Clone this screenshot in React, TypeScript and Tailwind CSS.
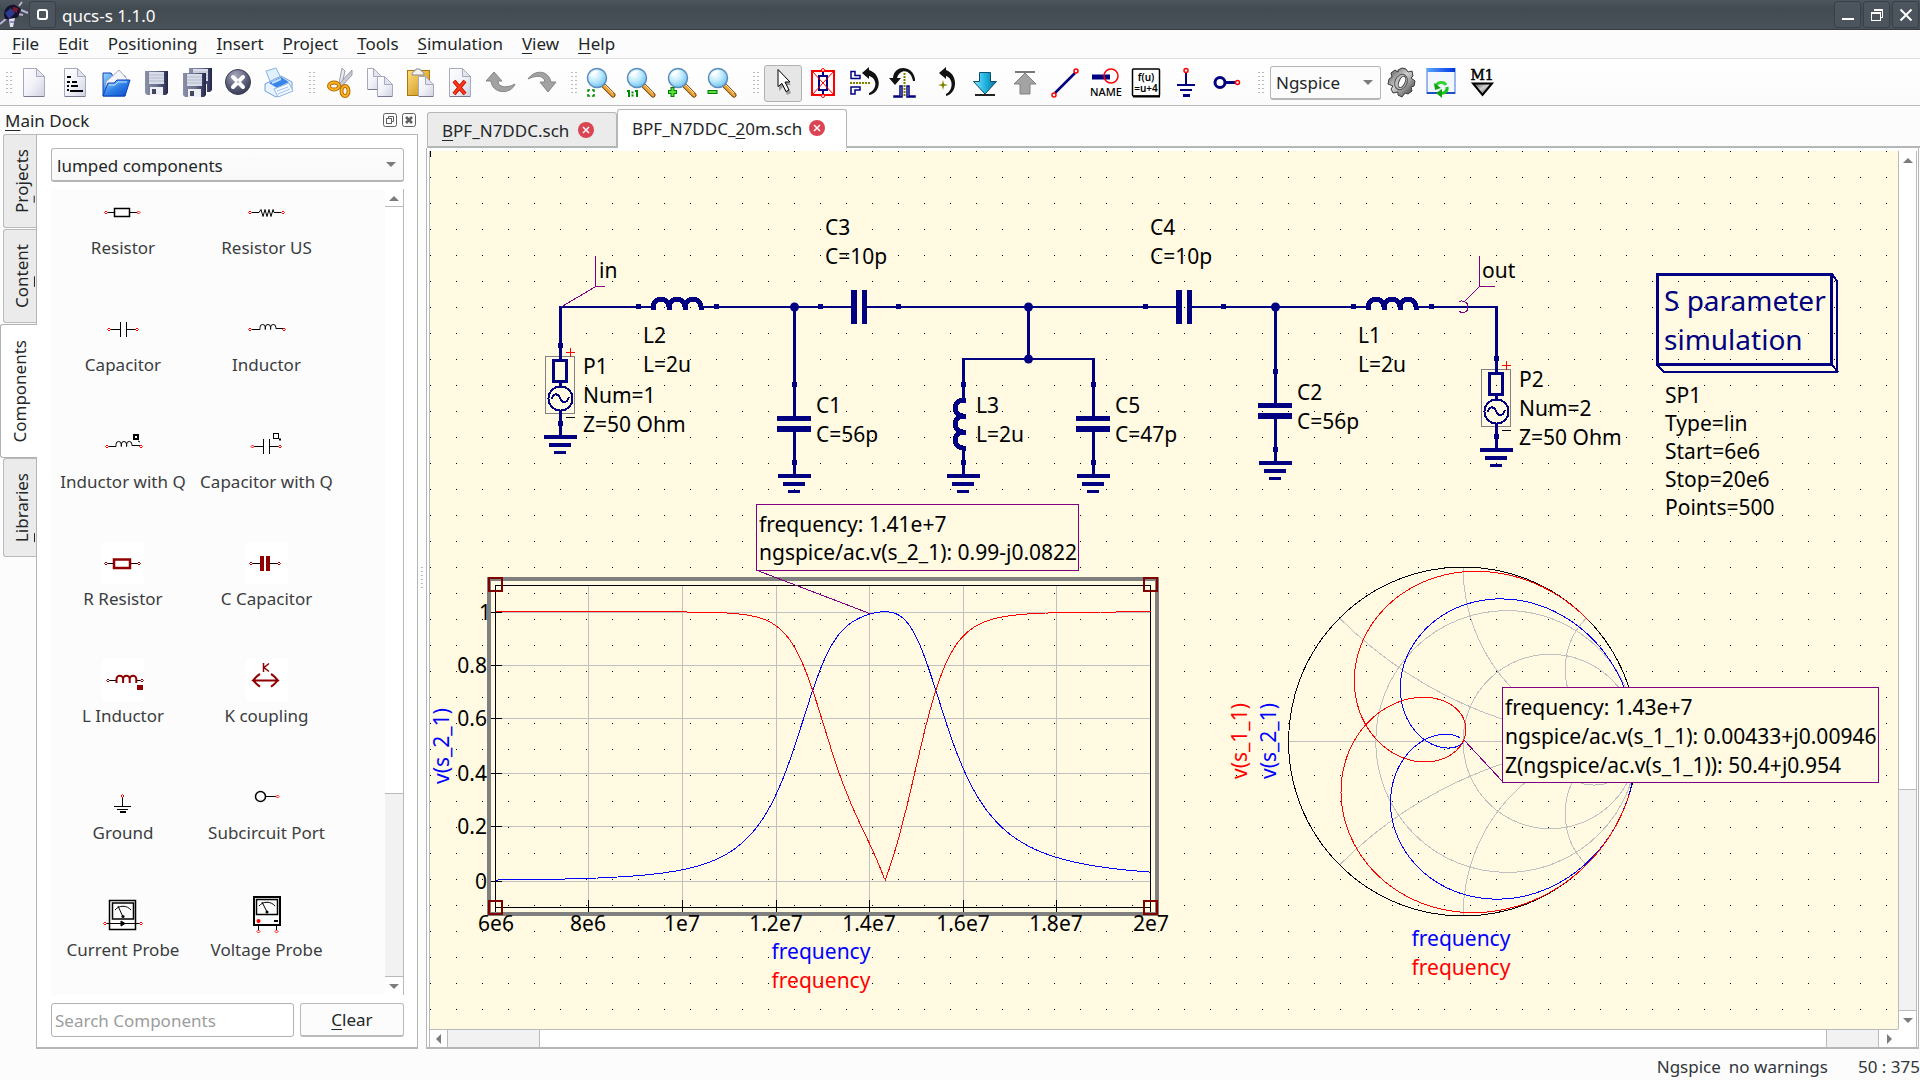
import React from "react";

/* ------------------------------------------------------------------ */
/* Filter model: lossless ladder, chain matrix [a, jb; jc, d]           */
/* ------------------------------------------------------------------ */
type Chain = [number, number, number, number];
type Complex = [number, number];

const mul = ([a, b, c, d]: Chain, [e, f, g, h]: Chain): Chain => [
  a * e - b * g,
  a * f + b * h,
  c * e + d * g,
  d * h - c * f,
];
const series = (x: number): Chain => [1, x, 0, 1];
const shunt = (b: number): Chain => [1, 0, b, 1];
const div = ([a, b]: Complex, [c, d]: Complex): Complex => {
  const m = c * c + d * d;
  return [(a * c + b * d) / m, (b * c - a * d) / m];
};

function sParams(f: number): { s11: Complex; s21: Complex } {
  const w = 2 * Math.PI * f;
  const xl = w * 2e-6;
  const xc = -1 / (w * 10e-12);
  const parts: Chain[] = [
    series(xl),
    shunt(w * 56e-12),
    series(xc),
    shunt(w * 47e-12 - 1 / xl),
    series(xc),
    shunt(w * 56e-12),
    series(xl),
  ];
  const [a, b, c, d] = parts.reduce(mul);
  const den: Complex = [a + d, b / 50 + c * 50];
  return { s11: div([a - d, b / 50 - c * 50], den), s21: div([2, 0], den) };
}

const sweep = Array.from({ length: 500 }, (_, i) => {
  const f = 6e6 + (14e6 * i) / 499;
  return { f, ...sParams(f) };
});
const line = (pts: Complex[]) =>
  "M" + pts.map(([x, y]) => x.toFixed(1) + " " + y.toFixed(1)).join("L");
const cart = (k: "s11" | "s21") =>
  line(
    sweep.map((p) => [
      495.5 + ((p.f - 6e6) / 14e6) * 655,
      880.5 - 268.8 * Math.hypot(p[k][0], p[k][1]),
    ]),
  );
const smith = (k: "s11" | "s21") =>
  line(sweep.map((p) => [1463 + 174.5 * p[k][0], 741.5 - 174.5 * p[k][1]]));

/* ------------------------------------------------------------------ */
/* Schematic symbols                                                    */
/* ------------------------------------------------------------------ */
const NAVY = "#000080";

const Pin = ({ x, y }: { x: number; y: number }) => (
  <rect x={x - 2} y={y - 2} width={5} height={5} fill={NAVY} />
);
const H = ({ x1, x2, y }: { x1: number; x2: number; y: number }) => (
  <rect x={x1} y={y - 1} width={x2 - x1} height={2} fill={NAVY} />
);
const V = ({ x, y1, y2 }: { x: number; y1: number; y2: number }) => (
  <rect x={x - 1} y={y1} width={3} height={y2 - y1} fill={NAVY} />
);
const Node = ({ x, y }: { x: number; y: number }) => (
  <circle cx={x + 0.5} cy={y} r={4.5} fill={NAVY} />
);
const Ground = ({ x, y }: { x: number; y: number }) => (
  <g fill={NAVY}>
    <rect x={x - 16} y={y} width={33} height={4} />
    <rect x={x - 11} y={y + 8} width={22} height={4} />
    <rect x={x - 6} y={y + 16} width={12} height={3} />
  </g>
);
const Label = ({
  x,
  y,
  lines,
  step = 29,
}: {
  x: number;
  y: number;
  lines: string[];
  step?: number;
}) => (
  <g fill="#000">
    {lines.map((t, i) => (
      <text key={t} x={x} y={y + i * step}>
        {t}
      </text>
    ))}
  </g>
);
const CoilH = ({ x }: { x: number }) => (
  <g>
    <H x1={x - 39} x2={x - 22} y={307} />
    <H x1={x + 22} x2={x + 39} y={307} />
    <path
      d={`M${x - 24} 310V307a8 8 0 0 1 16 0V310V307a8 8 0 0 1 16 0V310V307a8 8 0 0 1 16 0V310`}
      fill="none"
      stroke={NAVY}
      strokeWidth={5}
    />
    <Pin x={x - 39} y={306} />
    <Pin x={x + 39} y={306} />
  </g>
);
const CapH = ({ x }: { x: number }) => (
  <g fill={NAVY}>
    <H x1={x - 39} x2={x - 6} y={307} />
    <H x1={x + 6} x2={x + 39} y={307} />
    <rect x={x - 8} y={290} width={6} height={34} />
    <rect x={x + 3} y={290} width={5} height={34} />
    <Pin x={x - 39} y={306} />
    <Pin x={x + 39} y={306} />
  </g>
);
const CapV = ({ x, y }: { x: number; y: number }) => (
  <g fill={NAVY}>
    <V x={x} y1={y - 39} y2={y - 5} />
    <V x={x} y1={y + 5} y2={y + 52} />
    <rect x={x - 17} y={y - 7} width={34} height={5} />
    <rect x={x - 17} y={y + 3} width={34} height={6} />
    <Pin x={x} y={y - 39} />
    <Pin x={x} y={y + 39} />
    <Ground x={x} y={y + 51} />
  </g>
);
const Port = ({ x, y }: { x: number; y: number }) => (
  <g>
    <rect x={x - 14.5} y={y + 11.5} width={29} height={57} fill="none" stroke="#808080" />
    <V x={x} y1={y} y2={y + 14} />
    <V x={x} y1={y + 37} y2={y + 42} />
    <V x={x} y1={y + 66} y2={y + 91} />
    <rect x={x - 6.5} y={y + 15.5} width={13} height={21} fill="none" stroke={NAVY} strokeWidth={3} />
    <circle cx={x + 0.5} cy={y + 53.5} r={12} fill="none" stroke={NAVY} strokeWidth={2} />
    <path
      d={`M${x - 8} ${y + 54}c1 -6 6 -6 8 -1s7 6 9 -1`}
      fill="none"
      stroke={NAVY}
      strokeWidth={2}
    />
    <path d={`M${x + 6} ${y + 7.5}h9M${x + 10.5} ${y + 3}v9`} stroke="#f00" />
    <path d={`M${x + 6} ${y + 72.5}h9`} stroke="#000" />
    <Pin x={x} y={y} />
    <Pin x={x} y={y + 78} />
    <Ground x={x} y={y + 90} />
  </g>
);

const xTicks: [number, string][] = [
  [496, "6e6"],
  [588, "8e6"],
  [682, "1e7"],
  [776, "1.2e7"],
  [869, "1.4e7"],
  [963, "1.6e7"],
  [1056, "1.8e7"],
  [1151, "2e7"],
];
const yTicks: [number, string][] = [
  [612, "1"],
  [665, "0.8"],
  [718, "0.6"],
  [773, "0.4"],
  [826, "0.2"],
  [881, "0"],
];

function CartesianDiagram() {
  return (
    <g>
      <g shapeRendering="crispEdges" stroke="#c0c0c0">
        {xTicks.slice(1, 7).map(([x]) => (
          <path key={x} d={`M${x + 0.5} 586V907`} />
        ))}
        {yTicks.map(([y]) => (
          <path key={y} d={`M496 ${y + 0.5}H1150`} />
        ))}
      </g>
      <g fill="#000" textAnchor="end">
        {yTicks.map(([y, t]) => (
          <text key={t} x={t === "1" ? 491 : 487} y={y + 8}>
            {t}
          </text>
        ))}
      </g>
      <g shapeRendering="crispEdges" fill="none">
        <rect x={495.5} y={585.5} width={655} height={322} stroke="#000" />
        {xTicks.slice(1, 7).map(([x]) => (
          <path key={x} d={`M${x + 0.5} 900V912`} stroke="#000" />
        ))}
        {yTicks.map(([y]) => (
          <path key={y} d={`M491 ${y + 0.5}H502`} stroke="#000" />
        ))}
        <path d="M495.5 907V912M1150.5 907V912" stroke="#000" />
        <path d={cart("s21")} stroke="#00f" />
        <path d={cart("s11")} stroke="#f00" />
        <rect x={489} y={579} width={668} height={335} stroke="#808080" strokeWidth={4} />
        {[495, 1150].map((x) =>
          [584, 907].map((y) => (
            <rect
              key={`${x}-${y}`}
              x={x - 6}
              y={y - 6}
              width={13}
              height={13}
              stroke="#800000"
              strokeWidth={2}
            />
          )),
        )}
      </g>
      <g fill="#000" textAnchor="middle">
        {xTicks.map(([x, t]) => (
          <text key={t} x={x} y={931}>
            {t}
          </text>
        ))}
      </g>
      <g textAnchor="middle">
        <text x={821} y={959} fill="#00f">
          frequency
        </text>
        <text x={821} y={988} fill="#f00">
          frequency
        </text>
        <text transform="translate(449 746) rotate(-90)" fill="#00f">
          v(s_2_1)
        </text>
      </g>
      <path d="M756 570L871 614" stroke="#800080" shapeRendering="crispEdges" />
      <rect x={756.5} y={504.5} width={322} height={66} fill="#fffae1" stroke="#800080" />
      <Label x={759} y={532} lines={["frequency: 1.41e+7", "ngspice/ac.v(s_2_1): 0.99-j0.0822"]} step={28} />
    </g>
  );
}

function SmithDiagram() {
  const cx = 1463;
  const cy = 741.5;
  const r = 174.5;
  const right = cx + r;
  return (
    <g>
      <clipPath id="smith-clip">
        <circle cx={cx} cy={cy} r={r} />
      </clipPath>
      <g clipPath="url(#smith-clip)" fill="none" stroke="#c0c0c0" shapeRendering="crispEdges">
        <path d={`M${cx - r} ${cy}H${right}`} />
        {[1 / 3, 1, 3].map((k) => (
          <circle key={k} cx={right - r / (1 + k)} cy={cy} r={r / (1 + k)} />
        ))}
        {[0.4142, 1, 2.4142].map((k) => (
          <g key={k}>
            <circle cx={right} cy={cy - r / k} r={r / k} />
            <circle cx={right} cy={cy + r / k} r={r / k} />
          </g>
        ))}
      </g>
      <g fill="none" shapeRendering="crispEdges">
        <circle cx={cx} cy={cy} r={r} stroke="#000" />
        <path d={smith("s21")} stroke="#00f" />
        <path d={smith("s11")} stroke="#f00" />
        <path d="M1464 740L1503 782" stroke="#800080" />
      </g>
      <rect x={1502.5} y={687.5} width={376} height={95} fill="#fffae1" stroke="#800080" />
      <Label
        x={1505}
        y={715}
        lines={[
          "frequency: 1.43e+7",
          "ngspice/ac.v(s_1_1): 0.00433+j0.00946",
          "Z(ngspice/ac.v(s_1_1)): 50.4+j0.954",
        ]}
      />
      <g textAnchor="middle">
        <text x={1461} y={946} fill="#00f">
          frequency
        </text>
        <text x={1461} y={975} fill="#f00">
          frequency
        </text>
        <text transform="translate(1247 741) rotate(-90)" fill="#f00">
          v(s_1_1)
        </text>
        <text transform="translate(1276 741) rotate(-90)" fill="#00f">
          v(s_2_1)
        </text>
      </g>
    </g>
  );
}

function Schematic() {
  return (
    <svg
      className="absolute inset-0 h-full w-full bg-[#fffae1] text-[21px]"
      role="img"
      aria-label="Band-pass filter schematic"
    >
      <defs>
        <pattern id="grid-dots" width={26} height={26} patternUnits="userSpaceOnUse">
          <rect width={1} height={1} fill="#000" />
        </pattern>
      </defs>
      <rect width="100%" height="100%" fill="url(#grid-dots)" />
      <rect width={1} height={6} fill="#000" />
      <g transform="translate(-430 -151)">
        <g shapeRendering="crispEdges">
          <H x1={559} x2={638} y={307} />
          <H x1={716} x2={820} y={307} />
          <H x1={898} x2={1145} y={307} />
          <H x1={1223} x2={1353} y={307} />
          <H x1={1431} x2={1498} y={307} />
          <V x={560} y1={306} y2={346} />
          <V x={1496} y1={306} y2={359} />
          <V x={794} y1={307} y2={385} />
          <V x={1028} y1={307} y2={359} />
          <H x1={962} x2={1095} y={359} />
          <V x={963} y1={358} y2={401} />
          <V x={1093} y1={358} y2={385} />
          <V x={1275} y1={307} y2={372} />
          <CoilH x={677} />
          <CoilH x={1392} />
          <CapH x={859} />
          <CapH x={1184} />
          <CapV x={794} y={423} />
          <CapV x={1093} y={423} />
          <CapV x={1275} y={410} />
          <path
            d="M966 400H963a8 8 0 0 0 0 16H966H963a8 8 0 0 0 0 16H966H963a8 8 0 0 0 0 16H966"
            fill="none"
            stroke={NAVY}
            strokeWidth={5}
          />
          <V x={963} y1={447} y2={475} />
          <Pin x={963} y={384} />
          <Pin x={963} y={462} />
          <Ground x={963} y={474} />
          <Port x={560} y={345} />
          <Port x={1496} y={358} />
          <g fill="none" stroke="#800080">
            <path d="M595.5 256V286.5H605M595 287L561 307" />
            <path d="M1479.5 256V286.5H1495M1479 287L1465 301M1459 302C1461 300 1468 301 1468 307S1462 314 1459 311" />
          </g>
          <g fill="none" stroke={NAVY}>
            <rect x={1657.5} y={274.5} width={174} height={90} strokeWidth={3} />
            <path d="M1832 274L1837 281V372H1664L1657 365M1832 365L1838 372" strokeWidth={2} />
          </g>
        </g>
        <Node x={794} y={307} />
        <Node x={1028} y={307} />
        <Node x={1028} y={359} />
        <Node x={1275} y={307} />
        <Label x={599} y={278} lines={["in"]} />
        <Label x={1482} y={278} lines={["out"]} />
        <Label x={825} y={235} lines={["C3", "C=10p"]} />
        <Label x={1150} y={235} lines={["C4", "C=10p"]} />
        <Label x={643} y={343} lines={["L2", "L=2u"]} />
        <Label x={1358} y={343} lines={["L1", "L=2u"]} />
        <Label x={583} y={374} lines={["P1", "Num=1", "Z=50 Ohm"]} />
        <Label x={1519} y={387} lines={["P2", "Num=2", "Z=50 Ohm"]} />
        <Label x={816} y={413} lines={["C1", "C=56p"]} />
        <Label x={976} y={413} lines={["L3", "L=2u"]} />
        <Label x={1115} y={413} lines={["C5", "C=47p"]} />
        <Label x={1297} y={400} lines={["C2", "C=56p"]} />
        <Label
          x={1665}
          y={403}
          lines={["SP1", "Type=lin", "Start=6e6", "Stop=20e6", "Points=500"]}
          step={28}
        />
        <g fill={NAVY} className="text-[28px]">
          <text x={1664} y={311}>
            S parameter
          </text>
          <text x={1664} y={350}>
            simulation
          </text>
        </g>
        <CartesianDiagram />
        <SmithDiagram />
      </g>
    </svg>
  );
}

/* ------------------------------------------------------------------ */
/* Toolbar icons (32 x 32)                                              */
/* ------------------------------------------------------------------ */
const Ic = ({ children }: { children: React.ReactNode }) => (
  <svg width={32} height={32} viewBox="0 0 32 32" fill="none" aria-hidden="true">
    {children}
  </svg>
);

const SharedDefs = () => (
  <svg width={0} height={0} className="absolute" aria-hidden="true">
    <defs>
      <linearGradient id="paper" x1="0" y1="0" x2="1" y2="1">
        <stop offset="0" stopColor="#fff" />
        <stop offset=".5" stopColor="#f1f2f8" />
        <stop offset="1" stopColor="#cfd1e2" />
      </linearGradient>
      <linearGradient id="floppy" x1="0" y1="0" x2="1" y2="0">
        <stop offset="0" stopColor="#8a90a8" />
        <stop offset=".5" stopColor="#6d7390" />
        <stop offset="1" stopColor="#23264a" />
      </linearGradient>
      <linearGradient id="folder" x1="0" y1="0" x2="1" y2="1">
        <stop offset="0" stopColor="#9fdcff" />
        <stop offset=".5" stopColor="#2f7fe6" />
        <stop offset="1" stopColor="#0b48c8" />
      </linearGradient>
      <radialGradient id="glass" cx=".35" cy=".3" r=".75">
        <stop offset="0" stopColor="#fff" />
        <stop offset=".5" stopColor="#bfeafd" />
        <stop offset="1" stopColor="#6cc0ee" />
      </radialGradient>
      <linearGradient id="gold" x1="0" y1="0" x2="1" y2="1">
        <stop offset="0" stopColor="#ffe07a" />
        <stop offset="1" stopColor="#c88a14" />
      </linearGradient>
      <linearGradient id="metal" x1="0" y1="0" x2="1" y2="1">
        <stop offset="0" stopColor="#4a4a4a" />
        <stop offset=".45" stopColor="#d2d2d2" />
        <stop offset="1" stopColor="#2c2c2c" />
      </linearGradient>
      <linearGradient id="cyan" x1="0" y1="0" x2="1" y2="0">
        <stop offset="0" stopColor="#8be6ff" />
        <stop offset=".5" stopColor="#22b5e2" />
        <stop offset="1" stopColor="#066f9c" />
      </linearGradient>
      <linearGradient id="winbar" x1="0" y1="0" x2="1" y2="0">
        <stop offset="0" stopColor="#5aa6ff" />
        <stop offset="1" stopColor="#0035e0" />
      </linearGradient>
      <radialGradient id="disc" cx=".4" cy=".25" r=".8">
        <stop offset="0" stopColor="#a6a9bd" />
        <stop offset=".6" stopColor="#5b5e78" />
        <stop offset="1" stopColor="#34364d" />
      </radialGradient>
    </defs>
  </svg>
);

const Page = ({ x = 5, y = 1, w = 22, h = 29 }) => (
  <>
    <path
      d={`M${x + 0.5} ${y + 0.5}h${w - 9}l8 8v${h - 9}h-${w - 1}z`}
      fill="url(#paper)"
      stroke="#a7a9bf"
    />
    <path d={`M${x + w - 8.5} ${y + 0.5}v8h8z`} fill="#e3e4ee" stroke="#a7a9bf" />
    <path d={`M${x + 1} ${y + h - 0.5}h${w - 2}`} stroke="#77798f" />
  </>
);
const Disk = ({ x, y }: { x: number; y: number }) => (
  <g transform={`translate(${x} ${y})`}>
    <path d="M0 0H23V22L21 24H2L0 22Z" fill="url(#floppy)" />
    <rect x={4} y={1} width={15} height={12} fill="#d9dce9" />
    <path d="M4 4h15M4 7h15M4 10h15" stroke="#b5b9cc" />
    <rect x={5} y={16} width={13} height={8} fill="#eef0f6" />
    <rect x={7} y={18} width={4} height={5} fill="#43475f" />
  </g>
);
const Lens = ({ children }: { children: React.ReactNode }) => (
  <Ic>
    <path d="M20 19L29 28" stroke="#7a4a12" strokeWidth={5} strokeLinecap="round" />
    <path d="M20 19L29 28" stroke="#eda63a" strokeWidth={3} strokeLinecap="round" />
    <path d="M21 18l8 8" stroke="#ffe0a0" strokeWidth={1} />
    <circle cx={13} cy={11} r={9.5} fill="url(#glass)" stroke="#5a8dbd" strokeWidth={1.5} />
    <path d="M7 9c1-3 4-5 7-4" stroke="#fff" strokeWidth={2} />
    {children}
  </Ic>
);

const NewIcon = <Ic><Page /></Ic>;
const TextIcon = (
  <Ic>
    <Page />
    <path d="M8 10h4M8 15h3M13 15h5M8 19h2M12 19h7M8 23h2M11 24h13" stroke="#000" strokeWidth={2} />
  </Ic>
);
const OpenIcon = (
  <Ic>
    <path d="M3 6h8l2 3h12v20H3z" fill="url(#folder)" stroke="#0a3fb0" />
    <path d="M6 15L19 3l8 9v8H6z" fill="#f4f5fb" stroke="#a9acc6" />
    <path d="M3 29L8 16H14l3-3h13l-5 16z" fill="url(#folder)" stroke="#0a43bd" />
    <path d="M9 18h6l3-3h9" stroke="#bfe6ff" />
  </Ic>
);
const SaveIcon = <Ic><Disk x={5} y={4} /></Ic>;
const SaveAllIcon = (
  <Ic>
    <Disk x={8} y={1} />
    <Disk x={2} y={6} />
  </Ic>
);
const CloseIcon = (
  <Ic>
    <circle cx={16} cy={15} r={12.5} fill="url(#disc)" stroke="#3b3d55" />
    <path d="M11 10l10 10m0-10l-10 10" stroke="#fff" strokeWidth={4} strokeLinecap="round" />
    <circle cx={16} cy={15} r={1.500} fill="#c9cbd8" />
  </Ic>
);
const PrintIcon = (
  <Ic>
    <path d="M3 4l10-3 6 12-11 4z" fill="#dff0ff" stroke="#86b4e6" />
    <path d="M2 17l16-8 11 6v8L13 30 2 24z" fill="#e9f3ff" stroke="#6f9ed8" />
    <path d="M6 16l12-6 8 5-12 6z" fill="#3a86e8" />
    <path d="M9 16l9-4" stroke="#bfe0ff" strokeWidth={2} />
    <path d="M11 22l15-6 4 8-15 6z" fill="#f5faff" stroke="#8bb5e4" />
    <path d="M14 24l11-4M15 27l12-5" stroke="#9cc1ee" />
  </Ic>
);
const CutIcon = (
  <Ic>
    <path d="M18 1l-3 15 3 1 3-13z" fill="#e8e8ee" stroke="#9a9ca8" />
    <path d="M28 3L15 17l3 2L28 8z" fill="#c9cad6" stroke="#9a9ca8" />
    <ellipse cx={10} cy={19} rx={5} ry={3.500} stroke="#b56a00" strokeWidth={4} />
    <ellipse cx={10} cy={19} rx={5} ry={3.500} stroke="#ffb31f" strokeWidth={2} />
    <ellipse cx={21} cy={24} rx={3.500} ry={5} stroke="#b56a00" strokeWidth={4} />
    <ellipse cx={21} cy={24} rx={3.500} ry={5} stroke="#ffb31f" strokeWidth={2} />
  </Ic>
);
const CopyIcon = (
  <Ic>
    <Page x={3} y={1} w={15} h={22} />
    <Page x={13} y={9} w={16} h={21} />
  </Ic>
);
const PasteIcon = (
  <Ic>
    <rect x={2.5} y={3.5} width={22} height={25} fill="url(#gold)" stroke="#a8780e" />
    <path d="M7 8c0-4 3-3 4-6h4c1 3 4 2 4 6z" fill="#f2f2f2" stroke="#8a8a90" />
    <Page x={13} y={9} w={16} h={21} />
  </Ic>
);
const DeleteIcon = (
  <Ic>
    <Page x={4} />
    <path d="M9 14L20 27M20 14L9 27" stroke="#c01000" strokeWidth={4} />
    <path d="M9 14L20 27M20 14L9 27" stroke="#ff3a1a" strokeWidth={2} />
  </Ic>
);
const UndoIcon = (
  <Ic>
    <path d="M1 14L9 5l8 9h-4c0 6 8 8 17 3C26 28 7 27 6 14z" fill="#a2a2a2" stroke="#858585" />
  </Ic>
);
const RedoIcon = (
  <Ic>
    <path d="M2 12C8 3 22 2 25 15h5l-8 10-8-10h5c-1-7-9-7-17-3z" fill="#a2a2a2" stroke="#858585" />
  </Ic>
);
const FitIcon = (
  <Lens>
    <path d="M4 25v-2h2M8 23h2v2M4 27v2h2M8 29h2v-2" stroke="#008a00" strokeWidth={1.5} />
  </Lens>
);
const OneIcon = (
  <Lens>
    <path d="M3 24h2v6M11 24h2v6M8.500 24.500v2M8.500 27.500v2" stroke="#008a00" strokeWidth={2} />
  </Lens>
);
const PlusIcon = (
  <Lens>
    <path d="M7.500 20v10M3 25h9" stroke="#007a00" strokeWidth={4} />
    <path d="M7.500 21v8M4 25h7" stroke="#5be03a" strokeWidth={2} />
  </Lens>
);
const MinusIcon = (
  <Lens>
    <rect x={3} y={23.500} width={9} height={3} fill="#5be03a" stroke="#007a00" />
  </Lens>
);
const PointerIcon = (
  <Ic>
    <path d="M12 3v21l4-4 4 8 4-2-4-8h4z" fill="#9a9a9a" />
    <path d="M11 2.500v17l4-3 4 8 3-1.500-4-8h5z" fill="#fff" stroke="#000" />
  </Ic>
);
const DeactivateIcon = (
  <Ic>
    <g shapeRendering="crispEdges">
      <path d="M16 4v24" stroke={NAVY} strokeWidth={2} />
      <rect x={12} y={9} width={8} height={14} stroke={NAVY} strokeWidth={2} fill="#fff" />
      <rect x={5} y={4} width={22} height={24} stroke="#f00" strokeWidth={2} />
    </g>
    <path d="M5 4l22 24M27 4L5 28" stroke="#f00" />
    <circle cx={16} cy={3} r={1.500} fill="#fff" stroke="#f00" />
    <circle cx={16} cy={29} r={1.500} fill="#fff" stroke="#f00" />
  </Ic>
);
const MirrorXIcon = (
  <Ic>
    <path d="M3 4.500v7h9v-3h-5v-4zM3 27v-7h9v3h-5v4z" stroke={NAVY} strokeWidth={1.500} />
    <path d="M2 16h20" stroke="#808000" strokeWidth={2} strokeDasharray="2 1" />
    <path d="M14 6L21 0v3c13 4 13 23 0 25v-2c9-4 8-15 0-17v3z" fill="#111" />
  </Ic>
);
const MirrorYIcon = (
  <Ic>
    <path d="M6 29h6V19h2v11H6zM27 29h-6V19h-2v11h8z" stroke={NAVY} strokeWidth={1.500} />
    <path d="M16.500 6v24" stroke="#808000" strokeWidth={2} strokeDasharray="2 1" />
    <path d="M1 11h4C6-3 25-2 27 12v2h-2C23 2 12 1 9 11h4l-6 7z" fill="#111" />
  </Ic>
);
const RotateIcon = (
  <Ic>
    <path d="M15 13l1 4 4 1-4 1-1 4-1-4-4-1 4-1z" fill="#808000" />
    <path d="M11 6L18 0v3c12 4 12 23 0 26v-2c8-4 7-16 0-18v3z" fill="#111" />
  </Ic>
);
const IntoIcon = (
  <Ic>
    <path d="M10.500 5.500h11v9h6L16 27 4.500 14.500h6z" fill="url(#cyan)" stroke="#0a4f70" />
    <path d="M6 28h20" stroke="#222" strokeWidth={2} />
  </Ic>
);
const PopIcon = (
  <Ic>
    <path d="M6 5h20" stroke="#777" strokeWidth={2} />
    <path d="M16 6L27 17h-6v10H11V17H5z" fill="#a3a3a3" stroke="#808080" />
  </Ic>
);
const WireIcon = (
  <Ic>
    <path d="M6 26L26 6" stroke={NAVY} strokeWidth={2.500} />
    <circle cx={5} cy={28} r={2} fill="#fff" stroke="#f00" strokeWidth={1.500} />
    <circle cx={27} cy={4} r={2} fill="#fff" stroke="#f00" strokeWidth={1.500} />
  </Ic>
);
const NameIcon = (
  <Ic>
    <path d="M2 10h18" stroke={NAVY} strokeWidth={5} />
    <circle cx={21} cy={9} r={7} stroke="#f00" strokeWidth={1.500} />
    <text x={16} y={29} textAnchor="middle" fill="#000" className="text-[11px] font-medium">
      NAME
    </text>
  </Ic>
);
const EquationIcon = (
  <Ic>
    <rect x={2.500} y={2} width={27} height={27} rx={1} fill="#fff" stroke="#000" strokeWidth={1.500} />
    <path d="M3 29.500h27" stroke="#000" strokeWidth={2} />
    <text x={16} y={14} textAnchor="middle" fill="#000" className="text-[10px] font-semibold">
      f(u)
    </text>
    <text x={16} y={25} textAnchor="middle" fill="#000" className="text-[10px] font-semibold">
      =u+4
    </text>
  </Ic>
);
const GroundIcon = (
  <Ic>
    <path d="M16 5v13" stroke={NAVY} strokeWidth={2} />
    <path d="M7 18h18" stroke={NAVY} strokeWidth={2} />
    <path d="M10 23h12" stroke={NAVY} strokeWidth={2} />
    <path d="M13 28.500h7" stroke={NAVY} strokeWidth={3} />
    <circle cx={16} cy={3.500} r={2} fill="#fff" stroke="#f00" strokeWidth={1.500} />
  </Ic>
);
const PortIcon = (
  <Ic>
    <circle cx={9} cy={15.500} r={5} stroke={NAVY} strokeWidth={3} />
    <path d="M14 15.500h10" stroke={NAVY} strokeWidth={3} />
    <circle cx={26.500} cy={15.500} r={2} fill="#fff" stroke="#f00" strokeWidth={1.500} />
  </Ic>
);
const GearIcon = (
  <Ic>
    <path
      d="M13 3l4-2 4 1 2 3 4-1 1 5-2 2 4 3-1 5-3 1 1 4-4 3-3-1-3 4-4-2v-3l-5 1-2-4 2-3-5-2 1-5 3-2-1-4 4-3 3 2z"
      fill="url(#metal)"
      stroke="#3a3a3a"
    />
    <ellipse cx={16} cy={15} rx={6} ry={8} transform="rotate(25 16 15)" fill="#bdbdbd" stroke="#555" />
    <ellipse cx={17} cy={15} rx={3} ry={6} transform="rotate(25 17 15)" fill="#fff" stroke="#444" />
  </Ic>
);
const SimulateIcon = (
  <Ic>
    <rect x={2} y={1.500} width={28} height={25} fill="#f2f6ff" stroke="#3f74d6" />
    <rect x={2} y={1} width={28} height={4} fill="url(#winbar)" />
    <path d="M2 26h28" stroke="#1c4fc0" strokeWidth={2} />
    <path d="M11 19c1-4 8-5 10-1" stroke="#35d135" strokeWidth={3} />
    <path d="M9 16l1 7 6-2z" fill="#0fa00f" />
    <path d="M22 20c1 5-4 7-7 6" stroke="#19c419" strokeWidth={3} />
    <path d="M17 22v9l-6-5z" fill="#0fa00f" />
  </Ic>
);
const MarkerIcon = (
  <Ic>
    <text
      x={16}
      y={13}
      textAnchor="middle"
      fill="#000"
      stroke="#000"
      strokeWidth={0.500}
      className="font-['DejaVu_Serif',serif] text-[14px]"
    >
      M1
    </text>
    <path d="M7 16.500h19L16.500 28z" fill="url(#metal)" stroke="#000" strokeWidth={2} />
  </Ic>
);

type Tool = [string, React.ReactNode];
const fileTools: Tool[] = [
  ["New", NewIcon],
  ["New text", TextIcon],
  ["Open", OpenIcon],
  ["Save", SaveIcon],
  ["Save all", SaveAllIcon],
  ["Close", CloseIcon],
  ["Print", PrintIcon],
];
const editTools: Tool[] = [
  ["Cut", CutIcon],
  ["Copy", CopyIcon],
  ["Paste", PasteIcon],
  ["Delete", DeleteIcon],
  ["Undo", UndoIcon],
  ["Redo", RedoIcon],
];
const viewTools: Tool[] = [
  ["View all", FitIcon],
  ["View 1:1", OneIcon],
  ["Zoom in", PlusIcon],
  ["Zoom out", MinusIcon],
];
const workTools: Tool[] = [
  ["Select", PointerIcon],
  ["Deactivate", DeactivateIcon],
  ["Mirror about X axis", MirrorXIcon],
  ["Mirror about Y axis", MirrorYIcon],
  ["Rotate", RotateIcon],
  ["Go into subcircuit", IntoIcon],
  ["Pop out", PopIcon],
  ["Wire", WireIcon],
  ["Wire label", NameIcon],
  ["Insert equation", EquationIcon],
  ["Insert ground", GroundIcon],
  ["Insert port", PortIcon],
];
const simTools: Tool[] = [
  ["Simulator settings", GearIcon],
  ["Simulate", SimulateIcon],
  ["Set marker on graph", MarkerIcon],
];

const Tools = ({ items, active }: { items: Tool[]; active?: string }) => (
  <>
    {items.map(([name, icon]) => (
      <button
        key={name}
        aria-label={name}
        className={
          name === active
            ? "mx-px flex h-[37px] items-center justify-center rounded-[3px] border border-[#b0b1b2] bg-[#e6e6e6]"
            : "flex h-[37px] items-center justify-center"
        }
      >
        {icon}
      </button>
    ))}
  </>
);

const Grip = () => (
  <svg width={6} height={22} aria-hidden="true" shapeRendering="crispEdges">
    {[0, 4, 8, 12, 16, 20].map((y) => (
      <path key={y} d={`M0 ${y + 0.5}h2M4 ${y + 0.5}h2`} stroke="#b9babb" />
    ))}
  </svg>
);

/* ------------------------------------------------------------------ */
/* Component palette icons (42 x 42)                                    */
/* ------------------------------------------------------------------ */
const RED = "#f00";
const MAROON = "#900000";

const Dia = ({ x, y = 21.5, c = RED }: { x: number; y?: number; c?: string }) => (
  <path d={`M${x - 1.5} ${y}l1.500 -1.500l1.500 1.500l-1.500 1.500z`} stroke={c} fill="#fff" />
);
const Pal = ({ children, white }: { children: React.ReactNode; white?: boolean }) => (
  <svg
    width={42}
    height={42}
    viewBox="0 0 42 42"
    fill="none"
    stroke="#000"
    aria-hidden="true"
    className={white ? "bg-white" : ""}
  >
    {children}
  </svg>
);
const coil = "v-1a2.600 3 0 0 1 5.300 0v2v-2a2.600 3 0 0 1 5.300 0v2v-2a2.600 3 0 0 1 5.300 0v1";

const palette: Tool[] = [
  ["Resistor", <Pal><path d="M5 21.500h7M28 21.500h8" /><rect x={12.500} y={17.500} width={15} height={8} strokeWidth={1.500} /><Dia x={4} /><Dia x={36.500} /></Pal>],
  ["Resistor US", <Pal><path d="M6 21.500h7l2-3 2 7 2-7 2 7 2-7 2 7 2-7 1 3h7" /><Dia x={4} /><Dia x={37} /></Pal>],
  ["Capacitor", <Pal><path d="M8 21.500h10.500M24.500 21.500h10M18.500 14v15M24.500 14v15" /><Dia x={7} /><Dia x={35} /></Pal>],
  ["Inductor", <Pal><path d={`M6 21.500h8v-1${coil}h8`} /><Dia x={4} /><Dia x={38} /></Pal>],
  ["Inductor with Q", <Pal><path d={`M6 21.500h8v-1${coil}h8`} /><rect x={32} y={10} width={4} height={4} strokeWidth={2} /><path d="M36 16l2 1" /><Dia x={5} /><Dia x={39} /></Pal>],
  ["Capacitor with Q", <Pal><path d="M8 21.500h9.500M23.500 21.500h10M17.500 14v15M23.500 14v15" /><rect x={27.500} y={8.500} width={5} height={5} /><path d="M33 14.500h2" strokeWidth={2} /><Dia x={6.500} /><Dia x={34} /></Pal>],
  ["R Resistor", <Pal white><path d="M5 21.500h7M29 21.500h7" /><rect x={12} y={17.500} width={16} height={8.500} stroke={MAROON} strokeWidth={2.500} /><Dia x={4} c={MAROON} /><Dia x={37} c={MAROON} /></Pal>],
  ["C Capacitor", <Pal white><path d="M6 21.500h8M24 21.500h9" /><path d="M16 14v15M22 14v15" stroke={MAROON} strokeWidth={4} /><Dia x={5} c={MAROON} /><Dia x={33} c={MAROON} /></Pal>],
  ["L Inductor", <Pal white><path d="M6 21.500h8M35 21.500h4" /><path d="M14.500 24v-4a3.300 3.300 0 0 1 6.600 0v4v-4a3.300 3.300 0 0 1 6.600 0v4v-4a3.300 3.300 0 0 1 6.600 0v4" stroke={MAROON} strokeWidth={2} /><rect x={35} y={26} width={6} height={5} fill={MAROON} stroke="none" /><Dia x={6} c={MAROON} /><Dia x={40} c={MAROON} /></Pal>],
  ["K coupling", <Pal white><path d="M8 21.500h23M14 15c-4 2-4 4-7 6.500 3 2 3 4 7 6M25 15c4 2 4 4 7 6.500-3 2-3 4-7 6" stroke={MAROON} strokeWidth={2} /><path d="M17.500 4v9M23 4.500l-5 4 5 4" stroke={MAROON} strokeWidth={1.500} /></Pal>],
  ["Ground", <Pal><path d="M20.500 21v9M12 30.500h17M15 33.500h11" /><path d="M18 36h6" strokeWidth={2} /><Dia x={20.500} y={20} /></Pal>],
  ["Subcircuit Port", <Pal><circle cx={14.500} cy={20.500} r={5} strokeWidth={1.500} /><path d="M20 20.500h10" /><Dia x={31.500} y={20.500} /></Pal>],
  ["Current Probe", <Pal><rect x={7.500} y={7.500} width={26} height={29} strokeWidth={1.500} /><rect x={10.500} y={10} width={21} height={16} strokeWidth={1.500} /><path d="M13 17c4-5 12-5 16 0M16 13l5 11" /><circle cx={21} cy={23.500} r={1.500} fill="#000" stroke="none" /><path d="M4 30.500h34" /><path d="M19 28v5l4-2.500z" fill="#000" /><Dia x={3} y={30.500} /><Dia x={39} y={30.500} /></Pal>],
  ["Voltage Probe", <Pal><rect x={8} y={4} width={26} height={28} strokeWidth={2} /><rect x={10.500} y={6.500} width={21} height={15} strokeWidth={1.500} /><path d="M13 13c4-5 12-5 16 0M16 9l5 10" /><circle cx={21} cy={19} r={1.500} fill="#000" stroke="none" /><circle cx={12.500} cy={28} r={2} fill={RED} stroke="none" /><path d="M28 28h4" strokeWidth={2} /><path d="M12.500 32v5M30.500 32v5" /><Dia x={12.500} y={38.500} /><Dia x={30.500} y={38.500} /></Pal>],
];

/* ------------------------------------------------------------------ */
/* Window chrome                                                        */
/* ------------------------------------------------------------------ */
const U = ({ children }: { children: React.ReactNode }) => (
  <span className="underline decoration-1 underline-offset-[3px] [text-decoration-skip-ink:none]">
    {children}
  </span>
);

const Arrow = ({ dir }: { dir: "up" | "down" | "left" | "right" }) => {
  const d = {
    up: "M1 9L6 4L11 9z",
    down: "M1 4L6 9L11 4z",
    left: "M8 1L3 6L8 11z",
    right: "M4 1L9 6L4 11z",
  }[dir];
  return (
    <svg width={12} height={12} aria-hidden="true">
      <path d={d} fill="#7b7c7d" />
    </svg>
  );
};

const menus: [string, string, string][] = [
  ["", "F", "ile"],
  ["", "E", "dit"],
  ["P", "o", "sitioning"],
  ["", "I", "nsert"],
  ["", "P", "roject"],
  ["", "T", "ools"],
  ["", "S", "imulation"],
  ["", "V", "iew"],
  ["", "H", "elp"],
];

const titleButton =
  "flex h-[27px] w-[27px] items-center justify-center rounded-[3px] border border-[#394047] bg-[#4c555d]";

function TitleBar() {
  return (
    <header className="flex h-[30px] shrink-0 items-start border-b border-[#363c42] bg-gradient-to-b from-[#4d565e] via-[#434b52] via-30% to-[#4a5259] pt-px text-[#fcfcfc]">
      <svg width={29} height={28} viewBox="0 0 29 28" aria-hidden="true">
        <path d="M0 23l7-6M19 5l3-4M21 9l7 3M18 13l5 1" stroke="#b9b4d6" strokeWidth={2} />
        <path d="M4 14C4 7 9 3 15 4l6 4-3 8-7 3-6-1z" fill="#15122e" />
        <path d="M5 12l6-5 4 5-6 6z" fill="#2d3b8c" />
        <path d="M13 6l5 1-1 5-4-2z" fill="#7a1c28" />
        <path d="M9 18l6-1-2 9h-3z" fill="#e4e2f5" />
        <path d="M10 21h4" stroke="#3c3c86" />
      </svg>
      <button aria-label="Window menu" className={titleButton}>
        <span className="h-[11px] w-[11px] rounded-[3px] border-2 border-white" />
      </button>
      <h1 className="ml-1.5 flex-1 text-[17px] leading-[29px]">qucs-s 1.1.0</h1>
      <div className="flex gap-0.5 pr-px">
        <button aria-label="Minimize" className={titleButton}>
          <span className="mt-2 h-0.5 w-3 bg-white" />
        </button>
        <button aria-label="Restore" className={titleButton}>
          <svg width={14} height={14} fill="none" stroke="#fff" shapeRendering="crispEdges">
            <path d="M4 3V1.500H12.500V9.500H11" />
            <path d="M1 4.500h9v8H1.500V4" />
            <path d="M1 5h9M4 2h9" strokeWidth={2} />
          </svg>
        </button>
        <button aria-label="Close window" className={titleButton}>
          <svg width={14} height={14} stroke="#fff" strokeWidth={2}>
            <path d="M1.500 1.500l11 11M12.500 1.500l-11 11" />
          </svg>
        </button>
      </div>
    </header>
  );
}

const RedClose = ({ name }: { name: string }) => (
  <button aria-label={`Close ${name}`} className="flex">
    <svg width={16} height={16} aria-hidden="true">
      <circle cx={8} cy={8} r={8} fill="#da4453" />
      <path d="M5 5l6 6M11 5l-6 6" stroke="#fff" strokeWidth={1.500} />
    </svg>
  </button>
);

const sideTab =
  "ml-[3px] mr-px flex items-center justify-center rounded-l-[3px] border border-r-0 border-[#b9babb] bg-[#ebebeb] pl-0.5";
const sideText = "rotate-180 [writing-mode:vertical-rl]";

function Dock() {
  return (
    <aside className="flex w-[418px] shrink-0 flex-col">
      <div className="flex h-7 items-center pl-[5px] pr-0.5">
        <h2 className="flex-1">
          <U>M</U>ain Dock
        </h2>
        <button aria-label="Float dock">
          <svg width={14} height={14} fill="none" stroke="#5e6061" aria-hidden="true">
            <rect x={0.500} y={0.500} width={13} height={13} rx={2} />
            <path d="M5.500 5V3.500H10.500V8.500H9" />
            <rect x={3.500} y={5.500} width={5} height={5} />
          </svg>
        </button>
        <button aria-label="Close dock" className="ml-[5px]">
          <svg width={14} height={14} fill="none" stroke="#5e6061" aria-hidden="true">
            <rect x={0.500} y={0.500} width={13} height={13} rx={2} />
            <path d="M4 4l6 6M10 4l-6 6" strokeWidth={2.500} />
          </svg>
        </button>
      </div>
      <div className="flex min-h-0 flex-1">
        <div role="tablist" aria-label="Dock pages" className="z-10 -mr-px flex w-[37px] flex-col">
          <button role="tab" className={`${sideTab} h-[94px]`}>
            <span className={sideText}>P<U>r</U>ojects</span>
          </button>
          <button role="tab" className={`${sideTab} mt-px h-[94px]`}>
            <span className={sideText}>Co<U>n</U>tent</span>
          </button>
          <button
            role="tab"
            aria-selected="true"
            className="mt-px flex h-[134px] items-center justify-center rounded-l-[3px] border border-r-0 border-[#b0b1b2] bg-white"
          >
            <span className={sideText}>Components</span>
          </button>
          <button role="tab" className={`${sideTab} h-[99px]`}>
            <span className={sideText}><U>L</U>ibraries</span>
          </button>
        </div>
        <section className="flex min-w-0 flex-1 flex-col border border-b-2 border-[#b5b6b7] bg-white pb-2.5 pl-3.5 pr-[13px] pt-[13px]">
          <div className="relative">
            <select
              aria-label="Component group"
              className="h-[34px] w-full appearance-none rounded-[3px] border border-b-2 border-[#b5b6b7] bg-gradient-to-b from-[#fdfdfd] to-[#f8f8f8] px-[5px] pt-px"
            >
              <option>lumped components</option>
            </select>
            <span className="pointer-events-none absolute right-[7px] top-[10px]">
              <Arrow dir="down" />
            </span>
          </div>
          <div className="mt-[7px] flex min-h-0 flex-1">
            <ul className="grid min-w-0 flex-1 auto-rows-[117px] grid-cols-[144px_143px] overflow-hidden bg-[#fcfcfc] pt-0.5">
              {palette.map(([name, icon]) => (
                <li key={name}>
                  <button className="flex w-full flex-col items-center text-[#3b3d3f]">
                    {icon}
                    <span className="mt-[3px] whitespace-nowrap leading-[23px]">{name}</span>
                  </button>
                </li>
              ))}
            </ul>
            <div className="flex w-[19px] flex-col border-r border-[#b9babb]">
              <button aria-label="Scroll up" className="flex h-[18px] items-center justify-center border-b border-[#b9babb]">
                <Arrow dir="up" />
              </button>
              <div className="flex-[587] bg-white" />
              <div className="flex-[182] border-y border-[#b9babb] bg-[#f2f2f2]" />
              <button aria-label="Scroll down" className="flex h-[18px] items-center justify-center">
                <Arrow dir="down" />
              </button>
            </div>
          </div>
          <div className="mt-2 flex gap-1.5">
            <input
              aria-label="Search Components"
              placeholder="Search Components"
              className="h-[34px] min-w-0 flex-1 rounded-[3px] border border-[#b0b1b2] bg-white px-[3px] placeholder:text-[#9c9d9e]"
            />
            <button className="h-[34px] w-[104px] rounded-[3px] border border-b-2 border-[#b9babb] bg-[#fcfcfc]">
              <U>C</U>lear
            </button>
          </div>
        </section>
      </div>
    </aside>
  );
}

function Workspace() {
  return (
    <main className="flex min-w-0 flex-1 flex-col">
      <div role="tablist" aria-label="Documents" className="z-10 flex h-[42px] items-end pl-px">
        <div className="flex h-[36px] w-[190px] items-center gap-[9px] rounded-t-[3px] border border-b-2 border-[#b5b6b7] bg-[#ebebeb] pl-[14px] pt-px">
          <button role="tab">
            <U>B</U>PF_N7DDC.sch
          </button>
          <RedClose name="BPF_N7DDC.sch" />
        </div>
        <div className="flex h-[39px] w-[230px] items-center gap-[7px] rounded-t-[3px] border border-b-0 border-[#b5b6b7] bg-white pb-0.5 pl-[14px]">
          <button role="tab" aria-selected="true">
            BPF_N7DDC_<U>2</U>0m.sch
          </button>
          <RedClose name="BPF_N7DDC_20m.sch" />
        </div>
        <div className="h-0.5 flex-1 bg-[#b5b6b7]" />
      </div>
      <div className="mr-px flex min-h-0 flex-1 flex-col border-x border-b-2 border-[#b5b6b7] bg-white pl-0.5 pr-px pt-[3px]">
        <div className="flex min-h-0 flex-1 flex-col border-x border-[#b9babb]">
          <div className="flex min-h-0 flex-1">
            <div className="relative min-w-0 flex-1 overflow-hidden">
              <Schematic />
            </div>
            <div className="flex w-[18px] flex-col border-l border-[#b9babb]">
              <button aria-label="Scroll up" className="flex h-[18px] items-center justify-center">
                <Arrow dir="up" />
              </button>
              <div className="flex-[621] bg-white" />
              <div className="flex-[220] border-y border-[#b9babb] bg-[#f2f2f2]" />
              <button aria-label="Scroll down" className="flex h-[18px] items-center justify-center">
                <Arrow dir="down" />
              </button>
            </div>
          </div>
          <div className="mr-[18px] flex h-[18px] border-t border-[#b9babb]">
            <button aria-label="Scroll left" className="flex w-[17px] items-center justify-center">
              <Arrow dir="left" />
            </button>
            <div className="flex-[91] border-x border-[#b9babb] bg-[#f2f2f2]" />
            <div className="flex-[1286] bg-white" />
            <div className="flex-[51] border-x border-[#b9babb] bg-[#f2f2f2]" />
            <button aria-label="Scroll right" className="flex w-[19px] items-center justify-center">
              <Arrow dir="right" />
            </button>
          </div>
        </div>
      </div>
    </main>
  );
}

export default function App() {
  return (
    <div className="flex h-screen flex-col overflow-hidden bg-[#fcfcfc] font-['Noto_Sans',sans-serif] text-[17px] leading-[23px] text-[#232627]">
      <SharedDefs />
      <TitleBar />
      <nav aria-label="Menu" className="flex h-[29px] shrink-0 items-center gap-px border-b border-[#dedede] pb-0.5 pl-[3px]">
        {menus.map(([a, b, c]) => (
          <button key={b + c} className="px-[9px]">
            {a}
            <U>{b}</U>
            {c}
          </button>
        ))}
      </nav>
      <div className="flex h-[47px] shrink-0 items-center border-b border-[#b9babb] bg-gradient-to-b from-white to-[#fbfbfb] pl-1.5 pt-0.5">
        <Grip />
        <div className="ml-0.5 grid w-[285px] grid-cols-7">
          <Tools items={fileTools} />
        </div>
        <div className="ml-2.5"><Grip /></div>
        <div className="ml-[5px] grid w-[242px] grid-cols-6">
          <Tools items={editTools} />
        </div>
        <div className="ml-[9px]"><Grip /></div>
        <div className="ml-[3px] grid w-[161px] grid-cols-4">
          <Tools items={viewTools} />
        </div>
        <div className="ml-3"><Grip /></div>
        <div className="ml-1 grid w-[484px] grid-cols-12">
          <Tools items={workTools} active="Select" />
        </div>
        <div className="ml-[11px]"><Grip /></div>
        <div className="relative ml-1.5">
          <select
            aria-label="Simulator"
            className="h-[34px] w-[111px] appearance-none rounded-[3px] border border-b-2 border-[#b5b6b7] bg-[#fcfcfc] px-[5px]"
          >
            <option>Ngspice</option>
          </select>
          <span className="pointer-events-none absolute right-[7px] top-[10px]">
            <Arrow dir="down" />
          </span>
        </div>
        <div className="grid w-[121px] grid-cols-3">
          <Tools items={simTools} />
        </div>
      </div>
      <div className="flex min-h-0 flex-1">
        <Dock />
        <div className="flex w-2 shrink-0 items-center justify-center">
          <svg width={2} height={22} aria-hidden="true">
            {[0, 4, 8, 12, 16, 20].map((y) => (
              <rect key={y} y={y} width={2} height={1} fill="#b9babb" />
            ))}
          </svg>
        </div>
        <Workspace />
      </div>
      <footer className="flex h-[31px] shrink-0 items-center justify-end pt-1 text-[#31363b]">
        <span>Ngspice</span>
        <span className="ml-2">no warnings</span>
        <span className="ml-[30px]">50 : 375</span>
      </footer>
    </div>
  );
}
